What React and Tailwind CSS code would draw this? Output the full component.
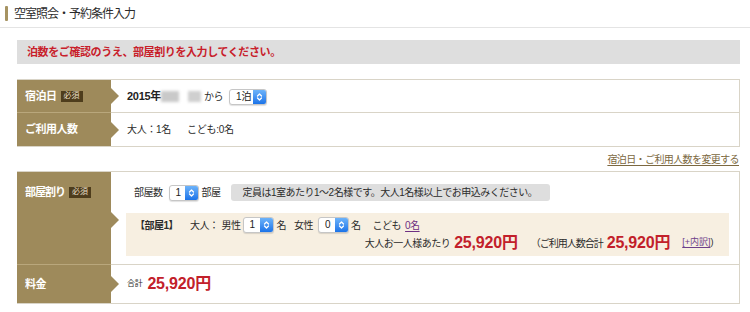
import React from "react";

const FONT = { fontFamily: '"Liberation Sans", "Noto Sans CJK JP", sans-serif' };

function MacSelect({ value, w = "w-[37px]" }) {
  return (
    <span className={`inline-flex items-center h-[16px] ${w} bg-white border border-[#c6c6c6] rounded-[3px] shadow-[0_1px_1px_rgba(0,0,0,0.12)] overflow-hidden align-middle`}>
      <span className="flex-1 pl-[6px] text-[10px] leading-none text-[#222] tracking-normal">{value}</span>
      <span className="w-[13px] h-full bg-gradient-to-b from-[#6cb3fa] to-[#1a73e8] flex items-center justify-center">
        <svg width="7" height="10" viewBox="0 0 7 10" fill="none" stroke="white" strokeWidth="1.3" strokeLinecap="round" strokeLinejoin="round">
          <path d="M1.5 4 L3.5 2 L5.5 4" />
          <path d="M1.5 6 L3.5 8 L5.5 6" />
        </svg>
      </span>
    </span>
  );
}

function Badge() {
  return (
    <span className="ml-[4px] inline-flex items-center justify-center w-[22px] h-[11px] bg-[#4e3d1c] text-[#e9dfc6] text-[8px] leading-none font-normal tracking-normal">
      必須
    </span>
  );
}

function HeadCell({ children, className = "", arrowTop = "top-1/2 -translate-y-1/2" }) {
  return (
    <div className={`relative w-[94px] shrink-0 bg-[#9e8a5b] text-white text-[11px] tracking-[-0.5px] font-bold pl-[8px] ${className}`}>
      <div className="flex items-center">{children}</div>
      <span className={`absolute -right-[8px] ${arrowTop} w-0 h-0 border-y-[8px] border-y-transparent border-l-[8px] border-l-[#9e8a5b] z-10`} />
    </div>
  );
}

const Price = ({ children }) => (
  <span className="text-[16px] font-bold text-[#c2202a] tracking-[-0.2px]">{children}</span>
);

export default function App() {
  return (
    <div className="w-[750px] h-[312px] bg-white text-[#2b2b2b] overflow-hidden" style={FONT}>
      {/* title */}
      <div className="h-[28px] border-b border-[#e4e4e4] flex items-center pl-[5px]">
        <span className="w-[3px] h-[15px] bg-[#a69362] rounded-[1px] mr-[6px]" />
        <span className="text-[12px] tracking-[-1px] text-[#2b2b2b] leading-none">空室照会・予約条件入力</span>
      </div>

      <div className="ml-[17px] mr-[10px]">
        {/* message */}
        <div className="mt-[12px] h-[24px] bg-[#dedede] flex items-center pl-[10px] text-[11px] tracking-[-0.4px] font-bold text-[#c8202a]">
          泊数をご確認のうえ、部屋割りを入力してください。
        </div>

        {/* table 1 */}
        <div className="mt-[15px] border-y border-r border-[#d9d4c7]">
          <div className="flex h-[32px]">
            <HeadCell className="flex items-center">
              <span>宿泊日</span>
              <Badge />
            </HeadCell>
            <div className="flex-1 flex items-center pl-[16px] text-[11px]">
              <span className="font-bold text-[#222] tracking-[-0.3px]">2015年</span>
              <span className="inline-block w-[18px] h-[11px] bg-[#c9c9c9] blur-[1.5px]" />
              <span className="inline-block w-[13px] h-[11px] bg-[#cfcfcf] blur-[1.5px] ml-[9px]" />
              <span className="ml-[3px] text-[10px] tracking-[-0.5px]">から</span>
              <span className="ml-[6px]">
                <MacSelect value="1泊" w="w-[38px]" />
              </span>
            </div>
          </div>
          <div className="flex h-[34px] border-t border-[#d9d4c7]">
            <HeadCell className="flex items-center border-t border-[#b9a77c] -mt-px">
              <span>ご利用人数</span>
            </HeadCell>
            <div className="flex-1 flex items-center pl-[16px] text-[10px] tracking-[-0.3px]">
              <span>大人：1名</span>
              <span className="ml-[16px]">こども:0名</span>
            </div>
          </div>
        </div>

        {/* change link */}
        <div className="h-[24px] flex items-center justify-end pr-[1px]">
          <span className="text-[10px] tracking-[-0.6px] text-[#7b6840] underline underline-offset-2">宿泊日・ご利用人数を変更する</span>
        </div>

        {/* table 2 */}
        <div className="border-y border-r border-[#d9d4c7]">
          <div className="flex h-[92px]">
            <HeadCell className="pt-[12px]" arrowTop="top-[40px]">
              <span className="tracking-[-1px]">部屋割り</span>
              <Badge />
            </HeadCell>
            <div className="flex-1 pl-[15px] pr-[10px] pt-[12px] pb-[8px] flex flex-col text-[10px] tracking-[-0.5px]">
              <div className="flex items-center h-[17px] pl-[8px]">
                <span>部屋数</span>
                <span className="ml-[6px]"><MacSelect value="1" w="w-[30px]" /></span>
                <span className="ml-[3px]">部屋</span>
                <span className="ml-[10px] h-[17px] flex items-center px-[12px] rounded-[3px] bg-[#dedede] w-[319px] whitespace-nowrap">
                  定員は1室あたり1〜2名様です。大人1名様以上でお申込みください。
                </span>
              </div>
              <div className="mt-[12px] h-[43px] bg-[#f7efe1] pl-[9px] pr-[16px] flex flex-col justify-center">
                <div className="flex items-center h-[18px] whitespace-nowrap">
                  <span className="font-bold">【部屋1】</span>
                  <span className="ml-[12px]">大人：</span>
                  <span className="ml-[3px]">男性</span>
                  <span className="ml-[2px]"><MacSelect value="1" w="w-[31px]" /></span>
                  <span className="ml-[3px]">名</span>
                  <span className="ml-[8px]">女性</span>
                  <span className="ml-[5px]"><MacSelect value="0" w="w-[31px]" /></span>
                  <span className="ml-[2px]">名</span>
                  <span className="ml-[12px]">こども</span>
                  <span className="ml-[4px] text-[#6d2f82] underline underline-offset-2">0名</span>
                </div>
                <div className="flex items-center justify-end h-[20px] -mt-[1px] whitespace-nowrap">
                  <span>大人お一人様あたり</span>
                  <span className="ml-[4px]"><Price>25,920円</Price></span>
                  <span className="ml-[13px] tracking-[-1px]">（ご利用人数合計</span>
                  <span className="ml-[4px]"><Price>25,920円</Price></span>
                  <span className="ml-[12px] text-[9px] tracking-normal text-[#6d3f8a] underline underline-offset-2">[+内訳]</span>
                  <span className="text-[9px]">)</span>
                </div>
              </div>
            </div>
          </div>
          <div className="flex h-[39px] border-t border-[#d9d4c7]">
            <HeadCell className="pt-[11px] border-t border-[#b9a77c] -mt-px">
              <span>料金</span>
            </HeadCell>
            <div className="flex-1 flex items-center pl-[16px]">
              <span className="text-[8px] mr-[5px] tracking-[-0.3px]">合計</span>
              <Price>25,920円</Price>
            </div>
          </div>
        </div>
      </div>
    </div>
  );
}
